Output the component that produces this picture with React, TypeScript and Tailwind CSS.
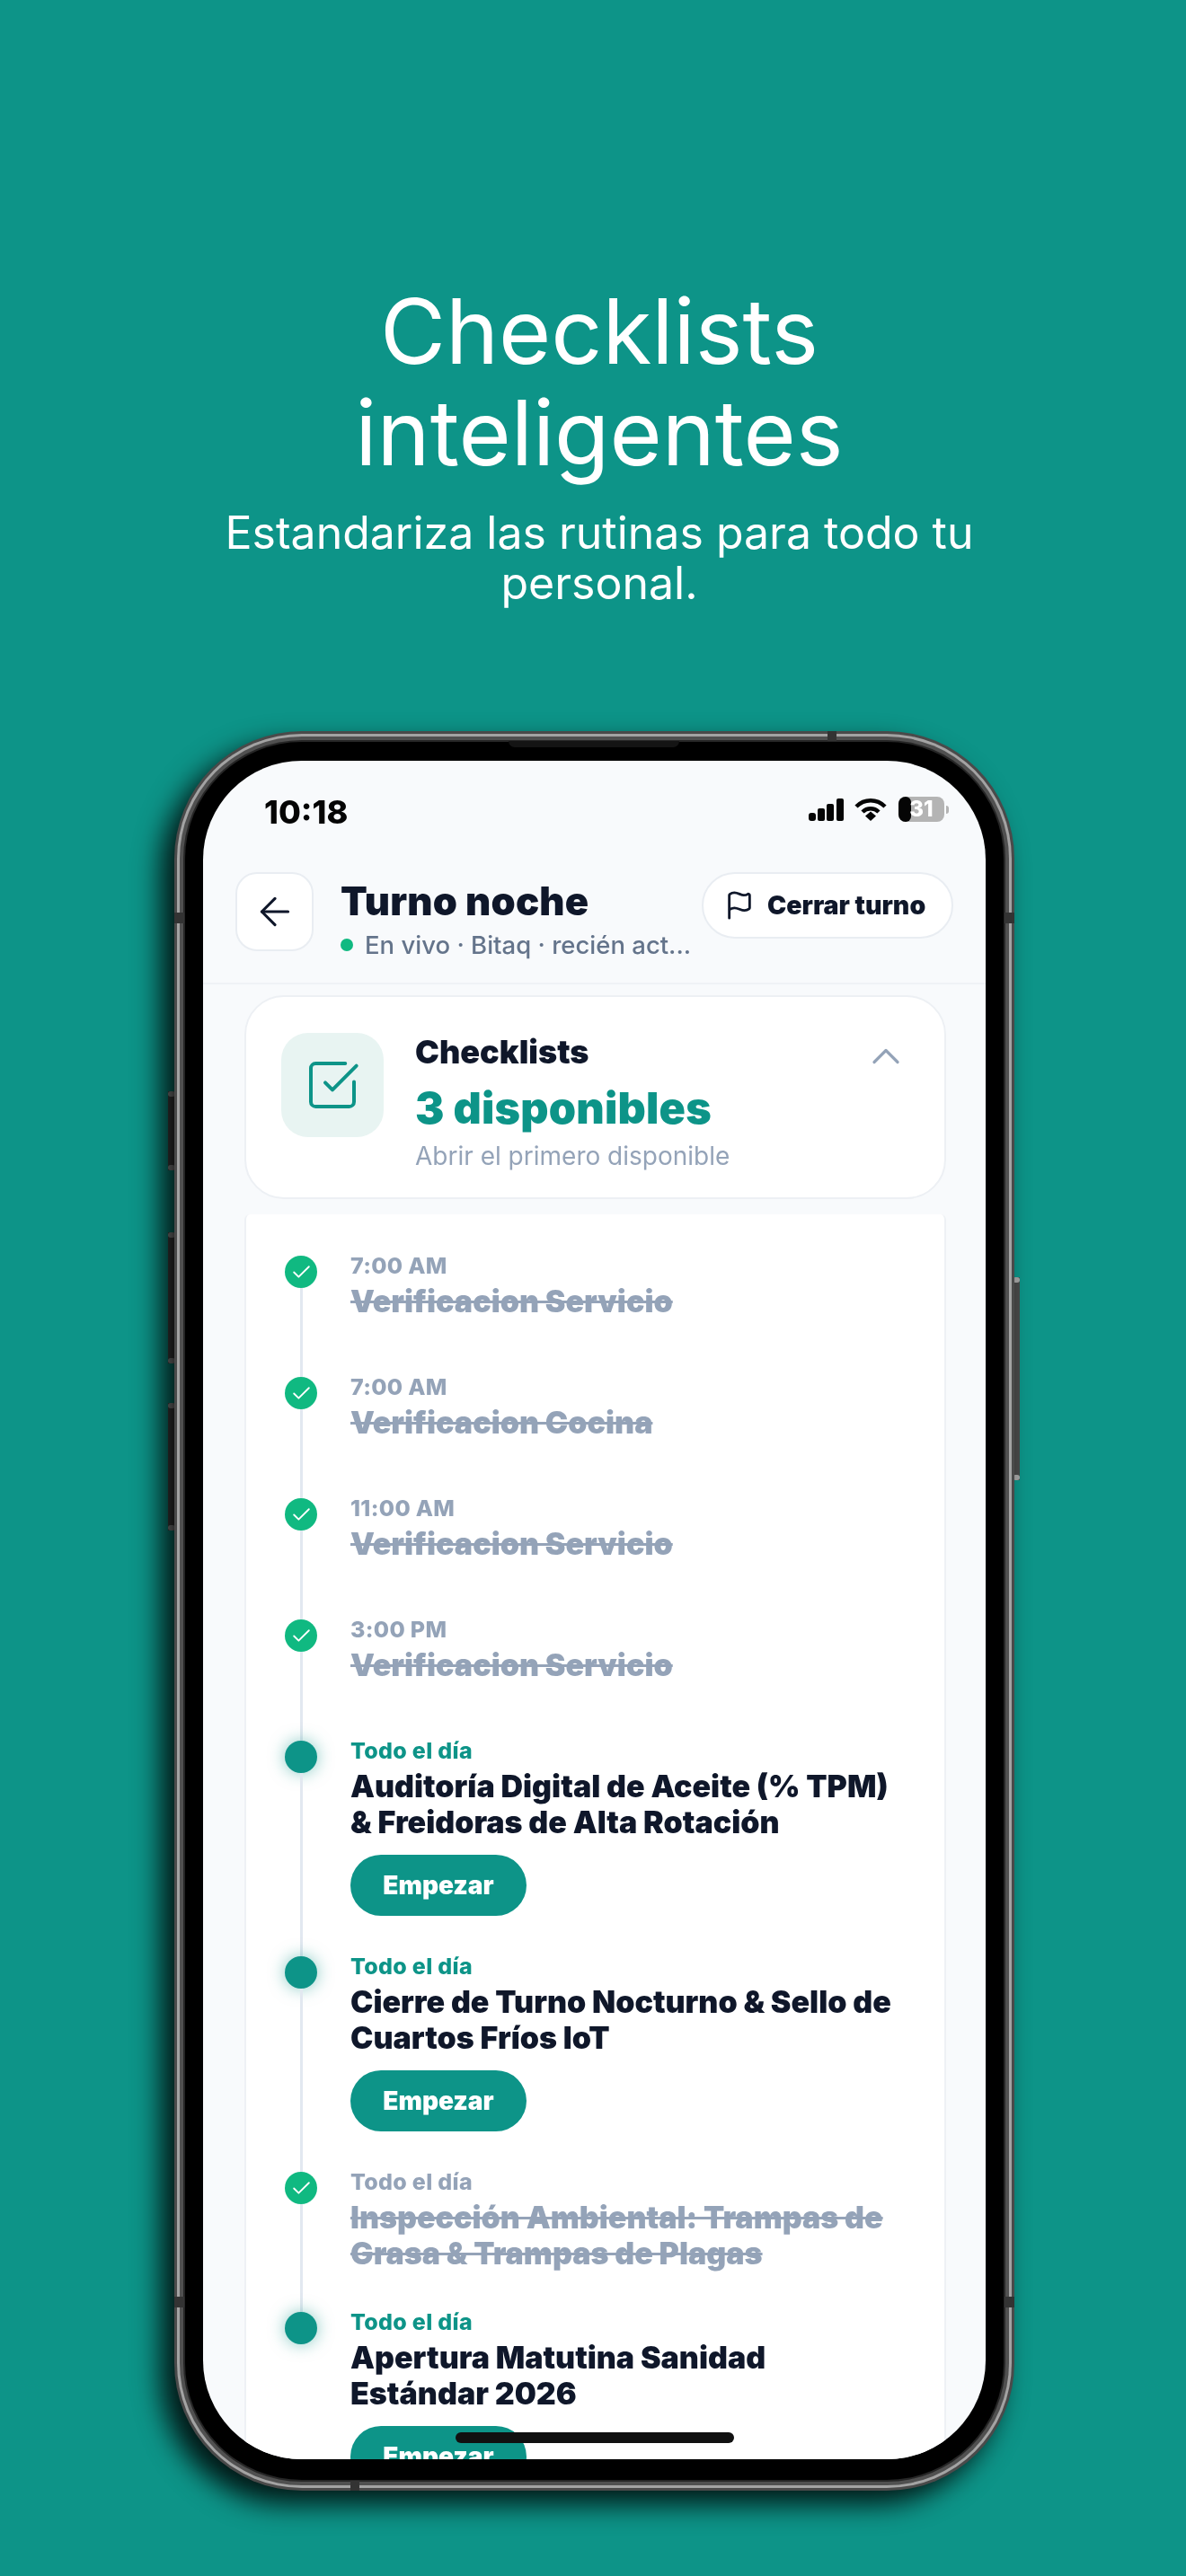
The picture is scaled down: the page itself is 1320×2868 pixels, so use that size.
import { ArrowLeft, Check, ChevronUp, Flag, SquareCheckBig } from 'lucide-react';

type Task = {
  label: string;
  title: string;
  done?: boolean;
  twoLines?: boolean;
};

const tasks: Task[] = [
  { label: '7:00 AM', title: 'Verificacion Servicio', done: true },
  { label: '7:00 AM', title: 'Verificacion Cocina', done: true },
  { label: '11:00 AM', title: 'Verificacion Servicio', done: true },
  { label: '3:00 PM', title: 'Verificacion Servicio', done: true },
  { label: 'Todo el día', title: 'Auditoría Digital de Aceite (% TPM) & Freidoras de Alta Rotación', twoLines: true },
  { label: 'Todo el día', title: 'Cierre de Turno Nocturno & Sello de Cuartos Fríos IoT', twoLines: true },
  { label: 'Todo el día', title: 'Inspección Ambiental: Trampas de Grasa & Trampas de Plagas', done: true, twoLines: true },
  { label: 'Todo el día', title: 'Apertura Matutina Sanidad Estándar 2026', twoLines: true },
];

function StatusIcons() {
  return (
    <div className="flex items-center">
      <svg width="39" height="25" viewBox="0 0 39 25" fill="#050505">
        <rect x="0" y="16" width="8" height="9" rx="3" />
        <rect x="10" y="11" width="8" height="14" rx="2" />
        <rect x="20" y="6" width="8" height="19" rx="2" />
        <rect x="31" y="0" width="8" height="25" rx="2" />
      </svg>
      <svg className="ml-[12px]" width="36" height="25" viewBox="0 0 36 25" fill="none" stroke="#050505" strokeWidth="4.5">
        <path d="M2 9C11 0 25 0 34 9" />
        <path d="M9 15C14 10 22 10 27 15" />
        <path d="M12 19.5L18 14.5L24 19.5L18 25Z" fill="#050505" stroke="none" />
      </svg>
      <div className="relative ml-[13px] flex h-[28px] w-[51px] items-center justify-center overflow-hidden rounded-[8px] bg-[#b4b4b4]">
        <div className="absolute inset-y-0 left-0 w-[14px] rounded-r-[6px] bg-[#050505]" />
        <span className="relative text-[24px] leading-none font-extrabold text-white">31</span>
      </div>
      <div className="ml-[2px] h-[9px] w-[3px] rounded-r-full bg-[#b4b4b4]" />
    </div>
  );
}

function TaskRow({ task, last }: { task: Task; last: boolean }) {
  return (
    <div className="flex">
      <div className="flex w-[36px] flex-col items-center">
        {task.done ? (
          <div className="flex h-[36px] w-[36px] shrink-0 items-center justify-center rounded-full bg-[#10b981]">
            <Check size={25} strokeWidth={1.75} className="text-white" />
          </div>
        ) : (
          <div className="h-[36px] w-[36px] shrink-0 rounded-full bg-[#0d9488] shadow-[0_0_18px_rgba(13,148,136,0.5)]" />
        )}
        {!last && <div className="w-[3px] flex-1 bg-[#e2e8f0]" />}
      </div>
      <div className={`-mt-[4px] ml-[37px] w-[612px] ${task.twoLines ? 'pb-[45px]' : 'pb-[64px]'}`}>
        <p className={`text-[25px] leading-[30px] font-extrabold tracking-[0.3px] ${task.done ? 'text-[#94a3b8]' : 'text-[#0d9488]'}`}>
          {task.label}
        </p>
        <p
          className={`mt-[5px] text-[34px] leading-[40px] font-black ${
            task.done ? 'text-[#94a3b8] line-through' : 'text-[#0f172a]'
          }`}
        >
          {task.title}
        </p>
        {!task.done && (
          <button className="mt-[16px] flex h-[68px] w-[196px] items-center justify-center rounded-full bg-[#0d9488] text-[28px] font-black text-white">
            Empezar
          </button>
        )}
      </div>
    </div>
  );
}

function Screen() {
  return (
    <div className="relative h-full overflow-hidden rounded-[110px] bg-[#f8fafc]">
      <div className="flex h-full flex-col blur-[0.7px]">
        {/* Status bar */}
        <div className="flex h-[124px] shrink-0 items-start justify-between pt-[40px] pr-[41px] pl-[68px]">
          <span className="text-[36px] leading-[34px] font-extrabold text-[#050505]">10:18</span>
          <StatusIcons />
        </div>

        {/* Header */}
        <div className="flex h-[125px] shrink-0 items-start border-b-2 border-[#eff2f6] pr-[36px] pl-[36px]">
          <button className="flex h-[88px] w-[87px] items-center justify-center rounded-[24px] border-2 border-[#e9edf2] bg-white">
            <ArrowLeft size={50} strokeWidth={1.5} className="text-[#0f172a]" />
          </button>
          <div className="ml-[30px] pt-[8px]">
            <h2 className="text-[43.5px] leading-[48px] font-black tracking-[0.2px] text-[#0f172a]">Turno noche</h2>
            <div className="mt-[8px] flex items-center">
              <span className="h-[14px] w-[14px] rounded-full bg-[#10b981]" />
              <span className="ml-[13px] text-[27.5px] leading-[34px] font-medium whitespace-nowrap text-[#64748b]">
                En vivo · Bitaq · recién act...
              </span>
            </div>
          </div>
          <button className="ml-auto flex h-[74px] w-[280px] items-center rounded-full border-2 border-[#e9edf2] bg-white pl-[23px]">
            <Flag size={34} strokeWidth={2} className="text-[#0f172a]" />
            <span className="ml-[14px] text-[28.5px] font-black whitespace-nowrap text-[#0f172a]">Cerrar turno</span>
          </button>
        </div>

        {/* Summary card */}
        <div className="mt-[12px] mr-[44px] ml-[46px] flex h-[227px] shrink-0 items-start rounded-[44px] border-2 border-[#edf0f4] bg-white pt-[40px] pr-[39px] pl-[39px]">
          <div className="flex h-[116px] w-[114px] shrink-0 items-center justify-center rounded-[30px] bg-[#e8f4f2]">
            <SquareCheckBig size={64} strokeWidth={1.5} className="text-[#0d9488]" />
          </div>
          <div className="ml-[35px]">
            <h3 className="text-[36px] leading-[42px] font-black text-[#0f172a]">Checklists</h3>
            <p className="mt-[14px] text-[48.5px] leading-[56px] font-black tracking-[0.2px] text-[#0d9488]">3 disponibles</p>
            <p className="mt-[7px] text-[28px] leading-[36px] text-[#94a3b8]">Abrir el primero disponible</p>
          </div>
          <ChevronUp size={52} strokeWidth={1.5} className="ml-auto text-[#94a3b8]" />
        </div>

        {/* Timeline */}
        <div className="mt-[17px] mr-[44px] ml-[46px] flex-1 rounded-t-[6px] border-x-2 border-[#eef1f5] bg-white pt-[46px] pl-[43px]">
          {tasks.map((task, index) => (
            <TaskRow key={index} task={task} last={index === tasks.length - 1} />
          ))}
        </div>
      </div>

      {/* Home indicator */}
      <div className="absolute bottom-[18px] left-1/2 h-[12px] w-[310px] -translate-x-1/2 rounded-full bg-[#111]" />
    </div>
  );
}

function SideKey({ className }: { className: string }) {
  return (
    <div className={`absolute flex w-[8px] flex-col justify-between bg-[#4a4a4a] ${className}`}>
      <div className="h-[6px] rounded-[3px] bg-[#a8a8a8]" />
      <div className="h-[6px] rounded-[3px] bg-[#a8a8a8]" />
    </div>
  );
}

function Phone() {
  return (
    <div className="relative mt-[137px] ml-[194px] h-[1959px] w-[935px]">
      {/* Side buttons */}
      <SideKey className="top-[401px] -left-[7px] h-[88px]" />
      <SideKey className="top-[558px] -left-[7px] h-[146px]" />
      <SideKey className="top-[748px] -left-[7px] h-[142px]" />
      <SideKey className="top-[608px] -right-[6px] h-[226px]" />

      {/* Body */}
      <div className="relative h-full rounded-[142px] bg-[#4a4a4a] p-[3px] shadow-[-15px_15px_30px_rgba(0,0,0,0.85)]">
        <div className="h-full rounded-[139px] bg-[#a3a3a3] p-[3px]">
          <div className="h-full rounded-[136px] bg-[#505050] p-[4px]">
            <div className="h-full rounded-[132px] bg-[#262626] p-[2px]">
              <div className="h-full rounded-[130px] bg-black pt-[21px] pr-[20px] pb-[23px] pl-[20px]">
                <Screen />
              </div>
            </div>
          </div>
        </div>
      </div>

      {/* Speaker sliver and antenna bands */}
      <div className="absolute top-[11px] left-[372px] h-[7px] w-[190px] rounded-b-[8px] bg-[#141414]" />
      <div className="absolute top-0 left-[727px] h-[11px] w-[10px] bg-[#333]" />
      <div className="absolute bottom-0 left-[196px] h-[11px] w-[10px] bg-[#333]" />
      <div className="absolute top-[202px] left-0 h-[12px] w-[11px] bg-[#333]" />
      <div className="absolute top-[202px] right-0 h-[12px] w-[11px] bg-[#333]" />
      <div className="absolute bottom-[204px] left-0 h-[12px] w-[11px] bg-[#333]" />
      <div className="absolute right-0 bottom-[204px] h-[12px] w-[11px] bg-[#333]" />
    </div>
  );
}

export default function App() {
  return (
    <div className="h-[2868px] overflow-hidden bg-[#0d9488] pt-[312px] font-['Inter',sans-serif]">
      <div className="pl-[14px] text-center text-white">
        <h1 className="mx-auto max-w-[800px] text-[100px] leading-[113px] font-normal">Checklists inteligentes</h1>
        <p className="mx-auto mt-[27px] max-w-[900px] text-[50px] leading-[56px] font-normal">
          Estandariza las rutinas para todo tu personal.
        </p>
      </div>
      <Phone />
    </div>
  );
}
